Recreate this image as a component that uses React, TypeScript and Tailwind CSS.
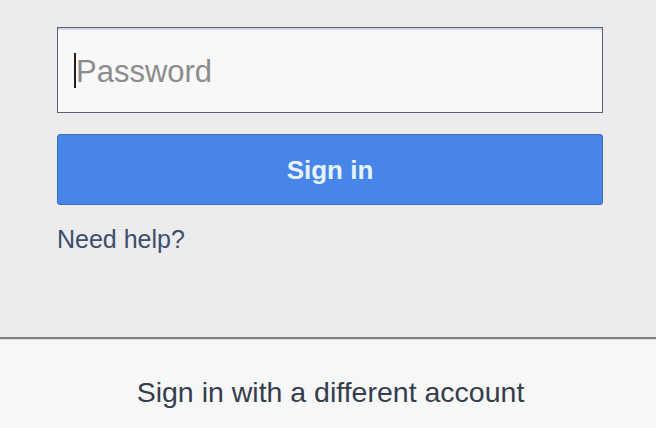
export default function App() {
  return (
    <div className="w-[656px] h-[428px] flex flex-col bg-[#ececec] font-['Liberation_Sans',Arial,sans-serif]">
      <div className="flex-1 flex flex-col pl-[57px] pr-[53px] pt-[27px]">
        <div className="h-[86px] flex items-center pl-[16px] bg-[#f8f8f9] border border-[#5b6170] shadow-[inset_0_2px_0_#c9d8ee]">
          <span className="w-[2px] h-[35px] bg-[#1f1f1f]" />
          <span className="text-[31px] leading-none text-[#8c8c8c] mt-[2px]">Password</span>
        </div>
        <button className="mt-[21px] h-[71px] rounded-[3px] bg-[#4785e9] border border-[#3a6cc0] flex items-center justify-center">
          <span className="text-[26px] leading-none font-bold text-[#e8f4fc]">Sign in</span>
        </button>
        <a className="mt-[22px] text-[25px] leading-none text-[#3e4d6c]">Need help?</a>
      </div>
      <div className="h-[2px] bg-[#7f7f7f]" />
      <div className="h-[89px] flex items-center justify-center pt-[16px] pl-[5px] bg-[#f7f7f7] border-t border-[#dcdcdc]">
        <span className="text-[28.5px] leading-none text-[#343d4c]">Sign in with a different account</span>
      </div>
    </div>
  );
}
